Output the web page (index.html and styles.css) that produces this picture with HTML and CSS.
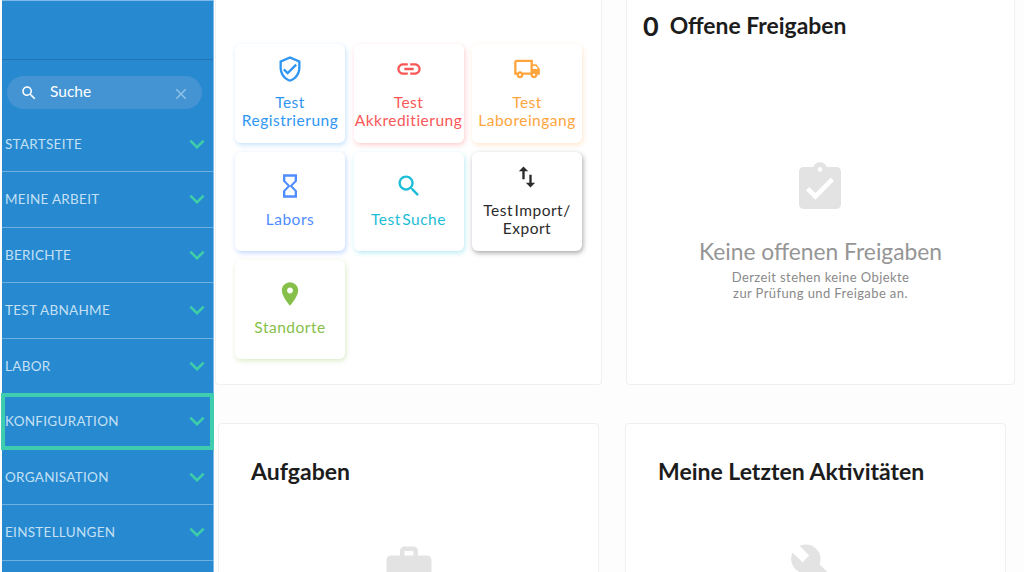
FILE: index.html
```html
<!DOCTYPE html>
<html lang="de">
  <head>
    <meta charset="utf-8">
    <title>Dashboard</title>
    <link rel="stylesheet" href="styles.css">
  </head>
  <body>
    <nav class="sidebar">
      <div class="sidebar-top"></div>
      <div class="search">
        <svg class="search-icon" viewBox="0 0 24 24"><path d="M15.5 14h-.79l-.28-.27C15.41 12.59 16 11.11 16 9.5 16 5.91 13.09 3 9.5 3S3 5.91 3 9.5 5.91 16 9.5 16c1.61 0 3.09-.59 4.23-1.57l.27.28v.79l5 4.99L20.49 19l-4.99-5zm-6 0C7.01 14 5 11.99 5 9.5S7.01 5 9.5 5 14 7.01 14 9.5 11.99 14 9.5 14z"/></svg>
        <span class="search-text">Suche</span>
        <svg class="search-clear" viewBox="0 0 24 24"><path d="M19 6.41L17.59 5 12 10.59 6.41 5 5 6.41 10.59 12 5 17.59 6.41 19 12 13.41 17.59 19 19 17.59 13.41 12z"/></svg>
      </div>
      <ul class="menu">
        <li class="menu-item"><span>STARTSEITE</span><svg class="chevron" viewBox="0 0 24 24"><path d="M16.59 8.59L12 13.17 7.41 8.59 6 10l6 6 6-6z"/></svg></li>
        <li class="menu-item"><span>MEINE ARBEIT</span><svg class="chevron" viewBox="0 0 24 24"><path d="M16.59 8.59L12 13.17 7.41 8.59 6 10l6 6 6-6z"/></svg></li>
        <li class="menu-item"><span>BERICHTE</span><svg class="chevron" viewBox="0 0 24 24"><path d="M16.59 8.59L12 13.17 7.41 8.59 6 10l6 6 6-6z"/></svg></li>
        <li class="menu-item"><span>TEST ABNAHME</span><svg class="chevron" viewBox="0 0 24 24"><path d="M16.59 8.59L12 13.17 7.41 8.59 6 10l6 6 6-6z"/></svg></li>
        <li class="menu-item"><span>LABOR</span><svg class="chevron" viewBox="0 0 24 24"><path d="M16.59 8.59L12 13.17 7.41 8.59 6 10l6 6 6-6z"/></svg></li>
        <li class="menu-item focused"><span>KONFIGURATION</span><svg class="chevron" viewBox="0 0 24 24"><path d="M16.59 8.59L12 13.17 7.41 8.59 6 10l6 6 6-6z"/></svg></li>
        <li class="menu-item"><span>ORGANISATION</span><svg class="chevron" viewBox="0 0 24 24"><path d="M16.59 8.59L12 13.17 7.41 8.59 6 10l6 6 6-6z"/></svg></li>
        <li class="menu-item"><span>EINSTELLUNGEN</span><svg class="chevron" viewBox="0 0 24 24"><path d="M16.59 8.59L12 13.17 7.41 8.59 6 10l6 6 6-6z"/></svg></li>
      </ul>
    </nav>

    <main class="content">
      <div class="row row-top">
        <section class="card card-tiles">
          <a class="tile tile-blue">
            <svg viewBox="0 0 24 24"><path d="M12 1L3 5v6c0 5.55 3.84 10.74 9 12 5.16-1.26 9-6.45 9-12V5l-9-4zm7 10c0 4.52-2.98 8.69-7 9.93-4.02-1.24-7-5.41-7-9.93V6.3l7-3.11 7 3.11V11zm-11.59.59L6 13l4 4 8-8-1.41-1.42L10 14.17z"/></svg>
            <span>Test<br>Registrierung</span>
          </a>
          <a class="tile tile-red">
            <svg viewBox="0 0 24 24"><path d="M3.9 12c0-1.71 1.39-3.1 3.1-3.1h4V7H7c-2.76 0-5 2.24-5 5s2.24 5 5 5h4v-1.9H7c-1.71 0-3.1-1.39-3.1-3.1zM8 13h8v-2H8v2zm9-6h-4v1.9h4c1.71 0 3.1 1.39 3.1 3.1s-1.39 3.1-3.1 3.1h-4V17h4c2.76 0 5-2.24 5-5s-2.24-5-5-5z"/></svg>
            <span>Test<br>Akkreditierung</span>
          </a>
          <a class="tile tile-orange">
            <svg viewBox="0 0 24 24"><path d="M20 8h-3V4H3c-1.1 0-2 .9-2 2v11h2c0 1.66 1.34 3 3 3s3-1.34 3-3h6c0 1.66 1.34 3 3 3s3-1.34 3-3h2v-5l-3-4zm-.5 1.5l1.96 2.5H17V9.5h2.5zM6 18c-.55 0-1-.45-1-1s.45-1 1-1 1 .45 1 1-.45 1-1 1zm2.22-3c-.55-.61-1.33-1-2.22-1s-1.67.39-2.22 1H3V6h12v9H8.22zM18 18c-.55 0-1-.45-1-1s.45-1 1-1 1 .45 1 1-.45 1-1 1z"/></svg>
            <span>Test<br>Laboreingang</span>
          </a>
          <a class="tile tile-single tile-indigo">
            <svg viewBox="0 0 24 24"><path d="M6 2v6h.01L6 8.01 10 12l-4 4 .01.01H6V22h12v-5.99h-.01L18 16l-4-4 4-3.99-.01-.01H18V2H6zm10 14.5V20H8v-3.5l4-4 4 4zm-4-5l-4-4V4h8v3.5l-4 4z"/></svg>
            <span>Labors</span>
          </a>
          <a class="tile tile-single tile-cyan">
            <svg viewBox="0 0 24 24"><path d="M15.5 14h-.79l-.28-.27C15.41 12.59 16 11.11 16 9.5 16 5.91 13.09 3 9.5 3S3 5.91 3 9.5 5.91 16 9.5 16c1.61 0 3.09-.59 4.23-1.57l.27.28v.79l5 4.99L20.49 19l-4.99-5zm-6 0C7.01 14 5 11.99 5 9.5S7.01 5 9.5 5 14 7.01 14 9.5 11.99 14 9.5 14z"/></svg>
            <span>Test Suche</span>
          </a>
          <a class="tile tile-dark">
            <svg viewBox="0 0 24 24"><path d="M16 17.01V10h-2v7.01h-3L15 21l4-3.99h-3zM9 3L5 6.99h3V14h2V6.99h3L9 3z"/></svg>
            <span>Test Import/<br>Export</span>
          </a>
          <a class="tile tile-single tile-green">
            <svg viewBox="0 0 24 24"><path d="M12 2C8.13 2 5 5.13 5 9c0 5.25 7 13 7 13s7-7.75 7-13c0-3.87-3.13-7-7-7zm0 9.5c-1.38 0-2.5-1.12-2.5-2.5s1.12-2.5 2.5-2.5 2.5 1.12 2.5 2.5-1.12 2.5-2.5 2.5z"/></svg>
            <span>Standorte</span>
          </a>
        </section>

        <section class="card card-approvals">
          <h2 class="approvals-title"><span class="count">0</span>Offene Freigaben</h2>
          <div class="empty">
            <svg class="empty-icon" viewBox="0 0 24 24"><path d="M19 3h-4.18C14.4 1.84 13.3 1 12 1c-1.3 0-2.4.84-2.82 2H5c-1.1 0-2 .9-2 2v14c0 1.1.9 2 2 2h14c1.1 0 2-.9 2-2V5c0-1.1-.9-2-2-2zm-7 0c.55 0 1 .45 1 1s-.45 1-1 1-1-.45-1-1 .45-1 1-1zm-2 14l-4-4 1.41-1.41L10 14.17l6.59-6.59L18 9l-8 8z"/></svg>
            <h3>Keine offenen Freigaben</h3>
            <p>Derzeit stehen keine Objekte<br>zur Prüfung und Freigabe an.</p>
          </div>
        </section>
      </div>

      <div class="row row-bottom">
        <section class="card card-lower">
          <h2>Aufgaben</h2>
          <svg class="lower-icon" viewBox="0 0 24 24"><path d="M20 6h-4V4c0-1.11-.89-2-2-2h-4c-1.11 0-2 .89-2 2v2H4c-1.11 0-1.99.89-1.99 2L2 19c0 1.11.89 2 2 2h16c1.11 0 2-.89 2-2V8c0-1.11-.89-2-2-2zm-6 0h-4V4h4v2z"/></svg>
        </section>
        <section class="card card-lower">
          <h2>Meine Letzten Aktivitäten</h2>
          <svg class="lower-icon" viewBox="0 0 24 24"><path d="M22.7 19l-9.1-9.1c.9-2.3.4-5-1.5-6.9-2-2-5-2.4-7.4-1.3L9 6 6 9 1.6 4.7C.4 7.1.9 10.1 2.9 12.1c1.9 1.9 4.6 2.4 6.9 1.5l9.1 9.1c.4.4 1 .4 1.4 0l2.3-2.3c.5-.4.5-1.1.1-1.4z"/></svg>
        </section>
      </div>
    </main>
  </body>
</html>
```

FILE: styles.css
```css
* {
  box-sizing: border-box;
}
html, body {
  height: 572px;
  overflow: hidden;
}
body {
  display: flex;
  margin: 0;
  padding-left: 2px;
  background: #fdfdfd;
  font-family: Lato, "Open Sans", sans-serif;
  color: #1c1c1c;
}

/* sidebar */

.sidebar {
  flex: none;
  width: 212px;
  height: 572px;
  background: #2789cf;
  border-top: 1px solid #7fbbe6;
  border-right: 1px solid #7fbbe6;
}
.sidebar-top {
  height: 59px;
  border-bottom: 1px solid #2076b5;
}
.search {
  display: flex;
  align-items: center;
  width: 195px;
  height: 33px;
  margin: 16px 0 7.5px 5px;
  padding: 0 12px 0 13px;
  border-radius: 17px;
  background: #4494d4;
  color: #fff;
}
.search-icon {
  width: 18px;
  height: 18px;
  fill: #fff;
}
.search-text {
  flex: 1;
  margin: -3px 0 0 12px;
  font-size: 15.5px;
}
.search-clear {
  width: 18px;
  height: 18px;
  margin-top: 2px;
  fill: #8fc0e6;
}
.menu {
  margin: 0;
  padding: 0;
  list-style: none;
}
.menu-item {
  display: flex;
  align-items: center;
  justify-content: space-between;
  height: 55.5px;
  padding: 0 1.5px 0 3px;
  border-bottom: 1px solid #6fb0e0;
  color: #c3e0f5;
  font-size: 13.5px;
  letter-spacing: 0.28px;
}
.menu-item.focused {
  height: 54.5px;
  margin-bottom: 1px;
  outline: 4px solid #3fcdb0;
  outline-offset: -3px;
}
.chevron {
  width: 30px;
  height: 30px;
  fill: #3fcfa8;
}

/* main area */

.content {
  flex: 1;
  min-width: 0;
  padding-left: 1px;
}
.row {
  display: flex;
}
.row-top {
  gap: 24px;
  height: 385px;
}
.row-bottom {
  gap: 26px;
  height: 149px;
  margin: 38px 0 0 3px;
}
.card {
  background: #fff;
  border: 1px solid #f0f0f0;
  border-radius: 4px;
}

/* tiles */

.card-tiles {
  display: grid;
  grid-template-columns: repeat(3, 110px);
  grid-template-rows: repeat(3, 98.5px);
  column-gap: 8.5px;
  row-gap: 9.5px;
  align-content: start;
  width: 387px;
  padding: 44px 0 0 19px;
  border-top: 0;
  border-radius: 0 0 4px 4px;
}
.tile {
  display: flex;
  flex-direction: column;
  align-items: center;
  padding-top: 11px;
  border-radius: 6px;
  background: #fff;
  font-size: 15.5px;
  line-height: 18px;
  letter-spacing: 0.5px;
  word-spacing: -3px;
  text-align: center;
  white-space: nowrap;
}
.tile-single {
  padding-top: 20px;
}
.tile svg {
  flex: none;
  width: 28px;
  height: 28px;
  margin-bottom: 9.5px;
  fill: currentColor;
}
.tile-blue {
  color: #2f96f3;
  box-shadow: 1px 2px 5px rgba(47, 150, 243, 0.28);
}
.tile-red {
  color: #fa5757;
  box-shadow: 1px 2px 5px rgba(250, 87, 87, 0.3);
}
.tile-orange {
  color: #ffa53d;
  box-shadow: 1px 2px 5px rgba(255, 165, 61, 0.25);
}
.tile-indigo {
  color: #4e8cff;
  box-shadow: 1px 2px 5px rgba(78, 140, 255, 0.35);
}
.tile-cyan {
  color: #1cbdd8;
  box-shadow: 1px 2px 5px rgba(28, 189, 216, 0.3);
}
.tile-dark {
  color: #2b2b2b;
  box-shadow: 1px 2px 5px rgba(0, 0, 0, 0.35);
}
.tile-green {
  color: #86c04a;
  box-shadow: 1px 2px 5px rgba(134, 192, 74, 0.3);
}

/* approvals */

.card-approvals {
  display: flex;
  flex-direction: column;
  width: 389px;
  padding: 10px 16px 0;
  border-top: 0;
  border-radius: 0 0 4px 4px;
}
.approvals-title {
  display: flex;
  align-items: center;
  height: 30px;
  margin: 0;
  font-size: 22.9px;
  font-weight: 700;
}
.count {
  margin-right: 11px;
  font-size: 27px;
}
.empty {
  display: flex;
  flex-direction: column;
  align-items: center;
  margin-top: 120px;
  text-align: center;
}
.empty-icon {
  width: 56px;
  height: 56px;
  margin-left: -1px;
  fill: #e3e3e3;
}
.empty h3 {
  margin: 22px 0 5px;
  color: #959595;
  font-size: 22.8px;
  font-weight: 400;
  line-height: 26px;
}
.empty p {
  margin: 0;
  color: #8a8a8a;
  font-size: 13px;
  line-height: 16px;
  letter-spacing: 0.4px;
}

/* lower cards, cut off by the bottom of the window */

.card-lower {
  display: flex;
  flex-direction: column;
  width: 381px;
  padding: 34px 32px 0;
  border-bottom: 0;
  border-radius: 4px 4px 0 0;
  overflow: hidden;
}
.card-lower h2 {
  margin: 0;
  font-size: 23px;
  font-weight: 700;
  line-height: 26px;
}
.lower-icon {
  align-self: center;
  flex: none;
  width: 54px;
  height: 54px;
  margin-top: 58px;
  fill: #e3e3e3;
}
```
